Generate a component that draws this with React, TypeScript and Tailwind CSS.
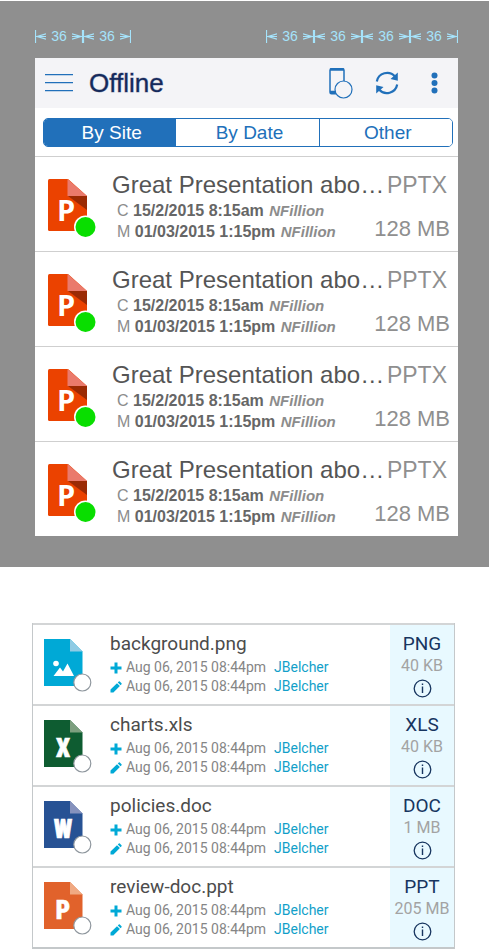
import React from "react";

interface Presentation {
  id: number;
  title: string;
  created: string;
  modified: string;
  author: string;
  type: string;
  size: string;
}

interface DocFile {
  name: string;
  type: string;
  size: string;
  color: string;
  fold: string;
  letter?: string;
}

const presentations: Presentation[] = [1, 2, 3, 4].map((id) => ({
  id,
  title: "Great Presentation abo…",
  created: "15/2/2015 8:15am",
  modified: "01/03/2015 1:15pm",
  author: "NFillion",
  type: "PPTX",
  size: "128 MB",
}));

const files: DocFile[] = [
  { name: "background.png", type: "PNG", size: "40 KB", color: "#00a9d6", fold: "#8fcbe4" },
  { name: "charts.xls", type: "XLS", size: "40 KB", color: "#0e5c31", fold: "#7d9f7f", letter: "X" },
  { name: "policies.doc", type: "DOC", size: "1 MB", color: "#275294", fold: "#8692bd", letter: "W" },
  { name: "review-doc.ppt", type: "PPT", size: "205 MB", color: "#e1622b", fold: "#f0a982", letter: "P" },
];

function Ruler({ count }: { count: number }) {
  return (
    <div className="flex text-[#a5e3fb]">
      {Array.from({ length: count }, (_, i) => (
        <div key={i} className="flex w-12 items-center justify-between">
          <svg width="11" height="13" viewBox="0 0 11 13" fill="none" stroke="currentColor" strokeWidth="1.200" aria-hidden="true">
            <path d="M.5 0v13M1 6.500h10M11 3.800 2 6.500l9 2.700" />
          </svg>
          <span className="text-sm leading-[14px]">36</span>
          <svg width="11" height="13" viewBox="0 0 11 13" fill="none" stroke="currentColor" strokeWidth="1.200" aria-hidden="true">
            <path d="M10.500 0v13M10 6.500H0M0 3.800 9 6.500 0 9.200" />
          </svg>
        </div>
      ))}
    </div>
  );
}

function PowerPointIcon() {
  return (
    <svg width="50" height="60" viewBox="0 0 50 60" className="shrink-0" aria-hidden="true">
      <path d="M1.500 0H20l19 17v35H1.500Q0 52 0 50.500v-49Q0 0 1.500 0Z" fill="#eb4200" />
      <path d="M19.500 0 39 17H19.500Z" fill="#ea7a6c" />
      <path d="M20 17h19v14Z" fill="#9b2a04" />
      <text x="9" y="42" fontSize="29" fontWeight="700" fill="#fff" fontFamily="Open Sans, sans-serif">
        P
      </text>
      <circle cx="37.500" cy="48" r="11.500" fill="#fff" />
      <circle cx="37.500" cy="48" r="10" fill="#09de00" />
    </svg>
  );
}

function FileIcon({ file }: { file: DocFile }) {
  return (
    <svg width="48" height="54" viewBox="0 0 48 54" className="shrink-0" aria-hidden="true">
      <path d="M0 0h26l12.500 12.500V47H0Z" fill={file.color} />
      <path d="M26 0l12.500 12.500H26Z" fill={file.fold} />
      {file.letter ? (
        <text
          x="19"
          y="37"
          textAnchor="middle"
          fontSize="25"
          fontWeight="900"
          fontFamily="Roboto Condensed, Open Sans Condensed, Roboto, sans-serif"
          fill="#fff"
          stroke="#fff"
          strokeWidth="0.600"
        >
          {file.letter}
        </text>
      ) : (
        <g fill="#fff">
          <circle cx="12" cy="24.500" r="2.800" />
          <path d="m9.500 37 6.500-8.500 3 4 4.500-8L30 37Z" />
        </g>
      )}
      <circle cx="38.300" cy="43.500" r="8.500" fill="#fff" stroke="#8f979e" strokeWidth="1.200" />
    </svg>
  );
}

function PlusMark() {
  return (
    <svg width="12" height="12" viewBox="0 0 12 12" className="shrink-0" aria-hidden="true">
      <path d="M6 .500v11M.5 6h11" stroke="#00a9d6" strokeWidth="3" />
    </svg>
  );
}

function PencilMark() {
  return (
    <svg width="12" height="12" viewBox="0 0 12 12" className="shrink-0" fill="#00a9d6" aria-hidden="true">
      <path d="M.5 11.500V8.600L7 2.200l2.900 2.900-6.500 6.400ZM7.800 1.500l1-1q.5-.4 1 0l1.700 1.700q.5.500 0 1l-.9 1.100Z" />
    </svg>
  );
}

function PresentationRow({ item }: { item: Presentation }) {
  const stamps = [
    ["C", item.created],
    ["M", item.modified],
  ];
  return (
    <li className="flex h-[95px] border-t border-[#cfcfcf] pr-2 pl-[13px] whitespace-nowrap">
      <div className="pt-[22px]">
        <PowerPointIcon />
      </div>
      <div className="ml-[14px] min-w-0 flex-1 pt-[13px]">
        <h2 className="text-2xl leading-[30px] text-[#555]">{item.title}</h2>
        {stamps.map(([mark, date]) => (
          <p key={mark} className="pl-[5px] text-base leading-[21px] text-[#8c8c8c]">
            {mark} <b className="text-[#666]">{date}</b>{" "}
            <b className="ml-px text-[15px] text-[#8c8c8c] italic">{item.author}</b>
          </p>
        ))}
      </div>
      <div className="flex flex-col items-end justify-between pt-[13px] pb-[7px] text-[#8f8f8f]">
        <span className="pr-[3px] text-[23px] leading-[30px]">{item.type}</span>
        <span className="text-[22px] leading-[30px]">{item.size}</span>
      </div>
    </li>
  );
}

function FileRow({ file }: { file: DocFile }) {
  return (
    <li className="flex h-[81px] border-t-2 border-[#d3d5d6] whitespace-nowrap">
      <div className="pt-[14px] pl-[11px]">
        <FileIcon file={file} />
      </div>
      <div className="ml-[18px] flex-1 pt-[7px]">
        <h2 className="mb-[2px] text-[19px] leading-6 text-[#4c4c4c]">{file.name}</h2>
        {[PlusMark, PencilMark].map((Mark, i) => (
          <p key={i} className="flex h-[19px] items-center text-sm leading-[19px] text-[#858585]">
            <Mark />
            <span className="ml-1">Aug 06, 2015 08:44pm</span>
            <a href="#jbelcher" className="ml-2 text-[#129fc9]">
              JBelcher
            </a>
          </p>
        ))}
      </div>
      <div className="flex w-16 flex-col items-center bg-[#e8f9ff] pt-[7px]">
        <span className="text-[19px] leading-6 text-[#17355f]">{file.type}</span>
        <span className="text-base leading-5 text-[#a3a3a3]">{file.size}</span>
        <button type="button" aria-label={`Details of ${file.name}`} className="mt-[3px]">
          <svg width="19" height="19" viewBox="0 0 19 19" fill="none" stroke="#17355f" className="block">
            <circle cx="9.500" cy="9.500" r="8.300" strokeWidth="1.300" />
            <path d="M9.500 7.500v6.500M9.500 4.500v1.500" strokeWidth="1.400" />
          </svg>
        </button>
      </div>
    </li>
  );
}

export default function App() {
  const [tab, setTab] = React.useState("By Site");
  return (
    <main className="bg-white pt-px">
      <section className="bg-[#8f8f8f] pt-7 pr-[31px] pb-[31px] pl-[35px] font-['Liberation_Sans',Arial,sans-serif]">
        <div className="mb-[15px] flex justify-between">
          <Ruler count={2} />
          <Ruler count={4} />
        </div>
        <div className="bg-white">
          <header className="flex h-[50px] items-center bg-[#f4f4f7] pr-5 pl-[10px] text-[#2170ba]">
            <button type="button" aria-label="Menu">
              <svg width="28" height="18" viewBox="0 0 28 18" className="block" stroke="currentColor" strokeWidth="1.300">
                <path d="M0 .7h28M0 8.700h28M0 16.700h28" />
              </svg>
            </button>
            <h1 className="ml-4 flex-1 text-[26px] leading-[30px] text-[#152a5c] [-webkit-text-stroke:1px_#152a5c66]">Offline</h1>
            <button type="button" aria-label="Device storage">
              <svg width="24" height="32" viewBox="0 0 24 32" className="block" fill="none" stroke="currentColor">
                <rect x="1" y="1.700" width="14" height="25" rx="1.500" strokeWidth="1.500" />
                <path d="M1 2.500h14M1 25h14" strokeWidth="2.600" />
                <circle cx="14.500" cy="22.500" r="8.500" fill="#f4f4f7" strokeWidth="1.200" />
              </svg>
            </button>
            <button type="button" aria-label="Refresh" className="ml-[22px]">
              <svg width="24" height="24" viewBox="0 0 24 24" className="block" fill="none" stroke="currentColor" strokeWidth="2.200">
                <path d="M1.800 10.500A10.500 10.500 0 0 1 20 5.500M22.200 13.500A10.500 10.500 0 0 1 4 18.500" />
                <path d="M22.800 1.500v8.300l-7.300-1.800ZM1.200 22.500v-8.300L8.500 16Z" fill="currentColor" stroke="none" />
              </svg>
            </button>
            <button type="button" aria-label="More" className="ml-[32px]">
              <svg width="7" height="22" viewBox="0 0 7 22" className="block" fill="currentColor">
                <circle cx="3.500" cy="3.500" r="3" />
                <circle cx="3.500" cy="11" r="3" />
                <circle cx="3.500" cy="18.500" r="3" />
              </svg>
            </button>
          </header>
          <div className="pt-[10px] pr-[5px] pb-[9px] pl-2">
            <div className="grid h-[29px] grid-cols-[133fr_144fr_133fr] divide-x divide-[#2170ba] overflow-hidden rounded-[5px] border border-[#2170ba] text-[19px] leading-[27px]">
              {["By Site", "By Date", "Other"].map((name) => (
                <button
                  key={name}
                  type="button"
                  aria-pressed={tab === name}
                  onClick={() => setTab(name)}
                  className={tab === name ? "bg-[#2170ba] pl-1 text-white" : "bg-white pl-1 text-[#2170ba]"}
                >
                  {name}
                </button>
              ))}
            </div>
          </div>
          <ul>
            {presentations.map((item) => (
              <PresentationRow key={item.id} item={item} />
            ))}
          </ul>
        </div>
      </section>
      <ul className="mt-14 mr-[34px] ml-8 border-x border-b-2 border-[#c4c8ca] font-[Roboto,sans-serif]">
        {files.map((file) => (
          <FileRow key={file.name} file={file} />
        ))}
      </ul>
    </main>
  );
}
